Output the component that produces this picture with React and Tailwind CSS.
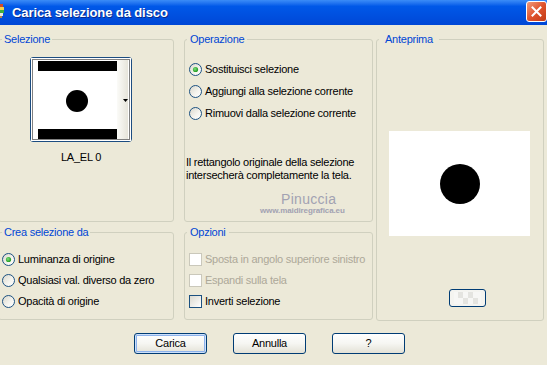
import React from "react";

function Radio({ checked }) {
  return (
    <svg width="13" height="13" viewBox="0 0 13 13" className="shrink-0 mr-[3px]">
      <defs>
        <linearGradient id="radioGrad" x1="0" y1="0" x2="1" y2="1">
          <stop offset="0" stopColor="#d8d6ca" />
          <stop offset="0.6" stopColor="#f6f5f0" />
          <stop offset="1" stopColor="#ffffff" />
        </linearGradient>
        <radialGradient id="dotGrad" cx="0.4" cy="0.4" r="0.6">
          <stop offset="0" stopColor="#7ee07e" />
          <stop offset="1" stopColor="#1f9a1f" />
        </radialGradient>
      </defs>
      <circle cx="6.5" cy="6.5" r="6" fill="url(#radioGrad)" stroke="#1c5180" strokeWidth="1" />
      {checked && <circle cx="6.5" cy="6.5" r="2.6" fill="url(#dotGrad)" />}
    </svg>
  );
}

function Check({ disabled }) {
  return disabled ? (
    <div className="w-[13px] h-[13px] shrink-0 mr-[3px] border border-[#cac8bb] bg-white" />
  ) : (
    <div className="w-[13px] h-[13px] shrink-0 mr-[3px] border border-[#1c5180] bg-linear-to-br from-[#dcdad0] to-white" />
  );
}

function Legend({ children, cls }) {
  return (
    <legend className={"leading-[13px] h-[13px] text-[#0046d5] " + cls}>{children}</legend>
  );
}

function Button({ children, def }) {
  return (
    <div
      className={
        "w-[73px] h-[21px] rounded-[3px] border border-[#003c74] bg-linear-to-b from-white via-[#f6f6f2] to-[#e3e1d6] flex items-center justify-center " +
        (def ? "shadow-[inset_0_0_0_1px_#cde0fa,inset_0_0_0_2px_#8db2eb]" : "")
      }
    >
      {children}
    </div>
  );
}

export default function App() {
  return (
    <div className="w-[547px] h-[365px] overflow-hidden bg-[#ece9d8] font-['Liberation_Sans',Arial,sans-serif] text-[11px] tracking-[-0.25px] text-black">
      {/* Title bar */}
      <div className="h-[25px] flex bg-linear-to-b from-[#3b8cf7] via-[#0058e8] via-25% to-[#0047d6]">
        <svg width="5" height="25" viewBox="0 0 5 25" className="shrink-0">
          <rect x="0" y="4" width="3" height="3" fill="#d04a2a" />
          <rect x="0" y="7" width="4" height="3" fill="#f2d24a" />
          <rect x="0" y="10" width="4" height="3" fill="#3fae3f" />
          <rect x="0" y="13" width="3" height="3" fill="#e8e8e0" />
          <rect x="0" y="16" width="2" height="2" fill="#b08050" />
        </svg>
        <div className="ml-[7px] self-center font-bold text-[13px] tracking-[-0.1px] text-white [text-shadow:1px_1px_0_#0a2a8a]">
          Carica selezione da disco
        </div>
        <div className="ml-auto mt-[1px] w-[21px] h-[21px] rounded-[3px] border border-white bg-linear-to-br from-[#f09a7a] via-[#e0532c] to-[#c23a14] flex items-center justify-center">
          <svg width="11" height="11" viewBox="0 0 11 11">
            <path d="M1.5 1.5 L9.5 9.5 M9.5 1.5 L1.5 9.5" stroke="white" strokeWidth="2" strokeLinecap="square" />
          </svg>
        </div>
      </div>

      {/* Groups */}
      <div className="flex mt-[8px]">
        {/* Left column */}
        <div className="flex flex-col ml-[-2px] w-[176px] shrink-0">
          <fieldset className="h-[189px] border border-[#d0d0bf] rounded-[3px]">
            <Legend cls="ml-[3px] px-[2px]">Selezione</Legend>
            <div className="ml-[31px] mt-[11px] w-[102px] h-[85px] rounded-[3px] border border-[#1c4c80] bg-white">
              <svg width="100" height="83" viewBox="0 0 100 83">
                <defs>
                  <linearGradient id="strip" x1="0" y1="0" x2="1" y2="0">
                    <stop offset="0" stopColor="#fbfbf8" />
                    <stop offset="1" stopColor="#e6e4da" />
                  </linearGradient>
                </defs>
                <rect x="0" y="0" width="100" height="83" fill="white" />
                <rect x="86" y="2" width="11" height="79" fill="url(#strip)" />
                <rect x="7" y="3" width="79" height="10" fill="black" />
                <rect x="7" y="71" width="79" height="10" fill="black" />
                <circle cx="46" cy="43" r="11" fill="black" />
                <path d="M92 41 L97 41 L94.5 44 Z" fill="black" />
                <rect x="1.5" y="1.5" width="97" height="80" fill="none" stroke="black" strokeWidth="1" strokeDasharray="1 1" />
              </svg>
            </div>
            <div className="ml-[31px] w-[102px] mt-[9px] leading-[13px] text-center">LA_EL 0</div>
          </fieldset>
          <fieldset className="mt-[4px] h-[94px] border border-[#d0d0bf] rounded-[3px]">
            <Legend cls="ml-[3px] px-[2px]">Crea selezione da</Legend>
            <div className="mt-[10px] pl-[3px] flex flex-col">
              <div className="h-[21px] flex items-center"><Radio checked />Luminanza di origine</div>
              <div className="h-[21px] flex items-center"><Radio />Qualsiasi val. diverso da zero</div>
              <div className="h-[21px] flex items-center"><Radio />Opacità di origine</div>
            </div>
          </fieldset>
        </div>

        {/* Middle column */}
        <div className="flex flex-col ml-[10px] w-[189px] shrink-0">
          <fieldset className="h-[189px] border border-[#d0d0bf] rounded-[3px]">
            <Legend cls="ml-[2px] px-[3px]">Operazione</Legend>
            <div className="mt-[12px] pl-[4px] flex flex-col">
              <div className="h-[22px] flex items-center"><Radio checked />Sostituisci selezione</div>
              <div className="h-[22px] flex items-center"><Radio />Aggiungi alla selezione corrente</div>
              <div className="h-[22px] flex items-center"><Radio />Rimuovi dalla selezione corrente</div>
            </div>
            <div className="mt-[32px] pl-[1px] leading-[13px]">
              Il rettangolo originale della selezione
              <br />
              intersecherà completamente la tela.
            </div>
            <div className="mt-[9px] ml-[96px] leading-[16px] text-[14px] tracking-[0.3px] font-medium text-[#a2a2b2]">Pinuccia</div>
            <div className="mt-[-1px] ml-[75px] leading-[10px] text-[8px] font-bold tracking-[-0.1px] text-[#a2a2b2]">www.maidiregrafica.eu</div>
          </fieldset>
          <fieldset className="mt-[4px] h-[94px] border border-[#d0d0bf] rounded-[3px]">
            <Legend cls="ml-[2px] px-[3px]">Opzioni</Legend>
            <div className="mt-[10px] pl-[4px] flex flex-col">
              <div className="h-[21px] flex items-center text-[#aca899]"><Check disabled />Sposta in angolo superiore sinistro</div>
              <div className="h-[21px] flex items-center text-[#aca899]"><Check disabled />Espandi sulla tela</div>
              <div className="h-[21px] flex items-center"><Check />Inverti selezione</div>
            </div>
          </fieldset>
        </div>

        {/* Right column */}
        <div className="ml-[3px] w-[168px] shrink-0">
          <fieldset className="h-[288px] border border-[#d0d0bf] rounded-[3px]">
            <Legend cls="ml-[2px] px-[6px]">Anteprima</Legend>
            <div className="ml-[12px] mt-[85px] w-[141px] h-[105px] bg-white flex items-center justify-center">
              <div className="w-[40px] h-[40px] rounded-full bg-black" />
            </div>
            <div className="ml-[72px] mt-[53px] w-[37px] h-[18px] rounded-[3px] border border-[#003c74] bg-[#f4f4f0] flex items-center justify-center overflow-hidden">
              <svg width="27" height="12" viewBox="0 0 27 12">
                <rect x="0" y="0" width="27" height="12" fill="#f7f7f5" />
                <rect x="4" y="0" width="5" height="6" fill="#e4e4e0" />
                <rect x="14" y="0" width="5" height="6" fill="#e4e4e0" />
                <rect x="9" y="6" width="5" height="6" fill="#e4e4e0" />
                <rect x="19" y="6" width="5" height="6" fill="#e4e4e0" />
              </svg>
            </div>
          </fieldset>
        </div>
      </div>

      {/* Buttons */}
      <div className="flex gap-[26px] pl-[134px] mt-[12px]">
        <Button def>Carica</Button>
        <Button>Annulla</Button>
        <Button>?</Button>
      </div>
    </div>
  );
}
